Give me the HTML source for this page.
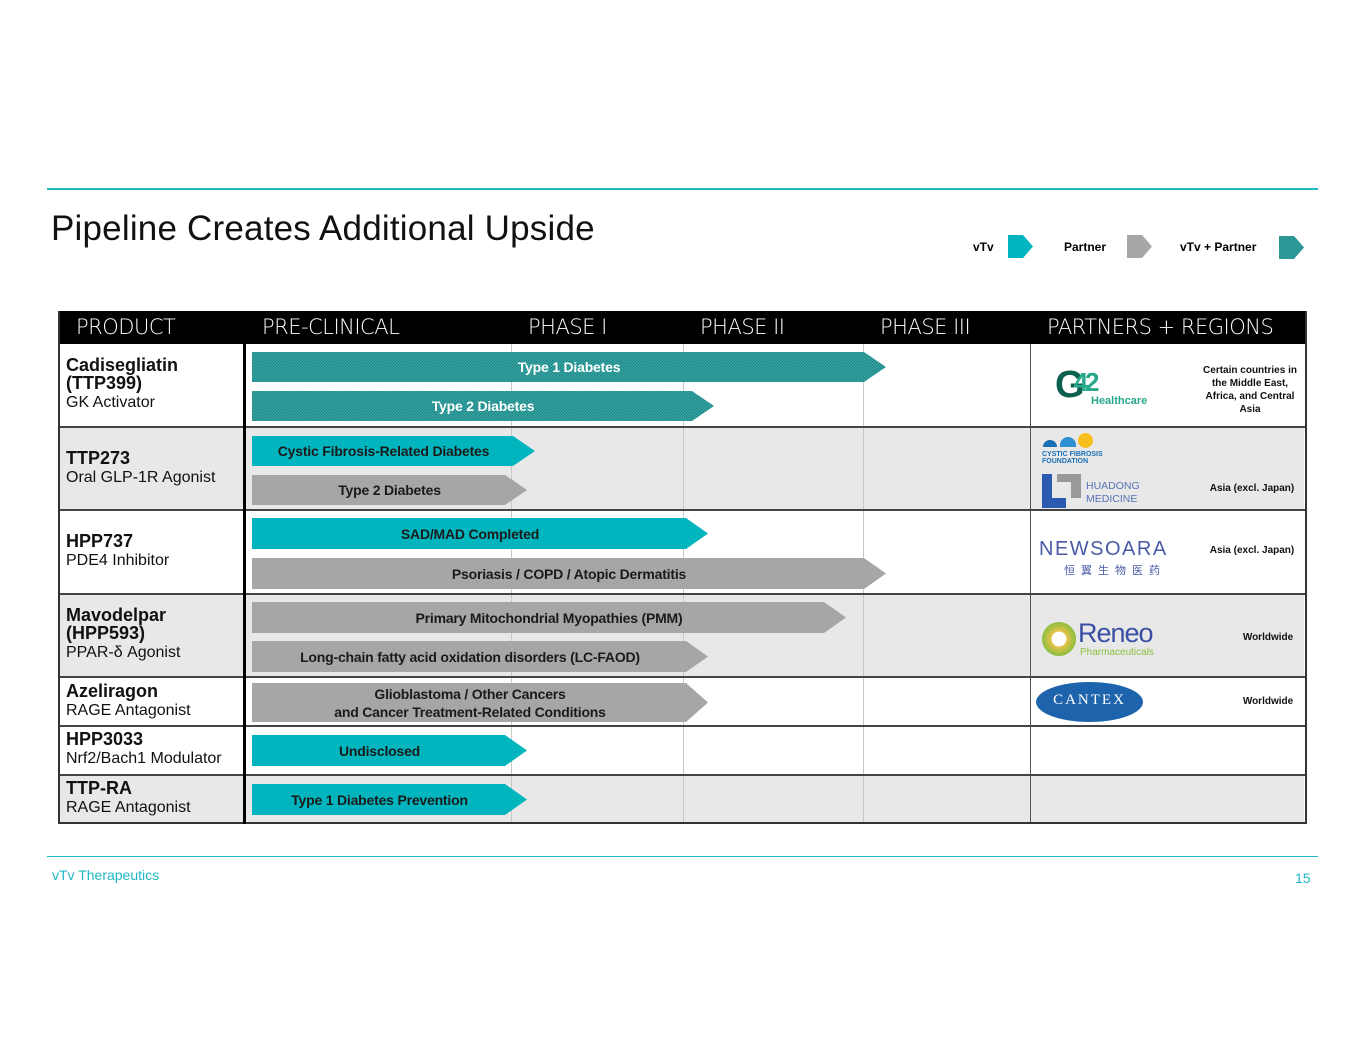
<!DOCTYPE html>
<html><head><meta charset="utf-8"><style>
body{margin:0;width:1365px;height:1055px;background:#fff;position:relative;font-family:"Liberation Sans",sans-serif;overflow:hidden}
.a{position:absolute}
.bar{position:absolute;color:#fff;font-weight:bold;font-size:14px;display:flex;align-items:center;justify-content:center;text-align:center;line-height:18px;letter-spacing:-0.2px}
.t{background:#00b5be;color:#1a1a1a}
.g{background:#a6a6a6;color:#1a1a1a}
.c{background:repeating-conic-gradient(#1f8585 0 25%,#3aa9a6 0 50%) 0 0/3px 3px;color:#fff}
.hd{position:absolute;top:311px;height:33px;line-height:33px;color:#fff;font-size:21px;font-family:"DejaVu Sans",sans-serif;font-weight:200;letter-spacing:-0.5px}
.pn{position:absolute;left:66px;font-size:18px;color:#111;line-height:18px}
.pn b{font-size:18px}
.rg{position:absolute;font-size:10px;font-weight:bold;text-align:center;color:#111;line-height:13px}
</style></head><body>
<div class="a" style="left:47px;top:188px;width:1271px;height:2px;background:#1fb8c3"></div>
<div class="a" style="left:51px;top:209px;font-size:35px;color:#111;font-family:'Liberation Sans',sans-serif;letter-spacing:0.2px">Pipeline Creates Additional Upside</div>
<div class="a" style="left:973px;top:240px;font-size:12px;font-weight:bold">vTv</div>
<div class="a" style="left:1008px;top:235px;width:25px;height:23px;background:#00b5be;clip-path:polygon(0 0,60% 0,100% 50%,60% 100%,0 100%)"></div>
<div class="a" style="left:1064px;top:240px;font-size:12px;font-weight:bold">Partner</div>
<div class="a" style="left:1127px;top:235px;width:25px;height:23px;background:#a6a6a6;clip-path:polygon(0 0,60% 0,100% 50%,60% 100%,0 100%)"></div>
<div class="a" style="left:1180px;top:240px;font-size:12px;font-weight:bold">vTv + Partner</div>
<div class="a c" style="left:1279px;top:236px;width:25px;height:23px;clip-path:polygon(0 0,60% 0,100% 50%,60% 100%,0 100%)"></div>

<!-- table -->
<div class="a" style="left:58px;top:311px;width:1247px;height:33px;background:#000"></div>
<div class="hd" style="left:76px">PRODUCT</div>
<div class="hd" style="left:262px">PRE-CLINICAL</div>
<div class="hd" style="left:528px">PHASE I</div>
<div class="hd" style="left:700px">PHASE II</div>
<div class="hd" style="left:880px">PHASE III</div>
<div class="hd" style="left:1047px">PARTNERS + REGIONS</div>
<div class="a" style="left:58px;top:344px;width:1246px;height:83px;background:#fff"></div>
<div class="a" style="left:58px;top:427px;width:1246px;height:83px;background:#e8e8e8"></div>
<div class="a" style="left:58px;top:594px;width:1246px;height:83px;background:#e8e8e8"></div>
<div class="a" style="left:58px;top:775px;width:1246px;height:49px;background:#e8e8e8"></div>
<div class="a" style="left:511px;top:344px;width:1px;height:480px;background:#c8c8c8"></div>
<div class="a" style="left:683px;top:344px;width:1px;height:480px;background:#c8c8c8"></div>
<div class="a" style="left:863px;top:344px;width:1px;height:480px;background:#c8c8c8"></div>
<div class="a" style="left:1030px;top:344px;width:1px;height:480px;background:#555"></div>
<div class="a" style="left:58px;top:426px;width:1247px;height:2px;background:#444"></div>
<div class="a" style="left:58px;top:509px;width:1247px;height:2px;background:#444"></div>
<div class="a" style="left:58px;top:593px;width:1247px;height:2px;background:#444"></div>
<div class="a" style="left:58px;top:676px;width:1247px;height:2px;background:#444"></div>
<div class="a" style="left:58px;top:725px;width:1247px;height:2px;background:#444"></div>
<div class="a" style="left:58px;top:774px;width:1247px;height:2px;background:#444"></div>
<div class="a" style="left:58px;top:311px;width:1245px;height:511px;border:2px solid #333;border-top:none"></div>
<div class="a" style="left:243px;top:311px;width:3px;height:513px;background:#000"></div>

<!-- products -->
<div class="pn" style="top:356px"><b>Cadisegliatin<br>(TTP399)</b><br><span style="font-size:16px">GK Activator</span></div>
<div class="pn" style="top:449px"><b>TTP273</b><br><span style="font-size:16px">Oral GLP-1R Agonist</span></div>
<div class="pn" style="top:532px"><b>HPP737</b><br><span style="font-size:16px">PDE4 Inhibitor</span></div>
<div class="pn" style="top:606px"><b>Mavodelpar<br>(HPP593)</b><br><span style="font-size:16px">PPAR-δ Agonist</span></div>
<div class="pn" style="top:682px"><b>Azeliragon</b><br><span style="font-size:16px">RAGE Antagonist</span></div>
<div class="pn" style="top:730px"><b>HPP3033</b><br><span style="font-size:16px">Nrf2/Bach1 Modulator</span></div>
<div class="pn" style="top:779px"><b>TTP-RA</b><br><span style="font-size:16px">RAGE Antagonist</span></div>

<!-- bars -->
<div class="bar c" style="left:252px;top:352px;width:634px;height:30px;clip-path:polygon(0 0,calc(100% - 22px) 0,100% 50%,calc(100% - 22px) 100%,0 100%)">Type 1 Diabetes</div>
<div class="bar c" style="left:252px;top:391px;width:462px;height:30px;clip-path:polygon(0 0,calc(100% - 22px) 0,100% 50%,calc(100% - 22px) 100%,0 100%)">Type 2 Diabetes</div>
<div class="bar t" style="left:252px;top:436px;width:283px;height:30px;padding-right:20px;box-sizing:border-box;clip-path:polygon(0 0,calc(100% - 22px) 0,100% 50%,calc(100% - 22px) 100%,0 100%)">Cystic Fibrosis-Related Diabetes</div>
<div class="bar g" style="left:252px;top:475px;width:275px;height:30px;clip-path:polygon(0 0,calc(100% - 22px) 0,100% 50%,calc(100% - 22px) 100%,0 100%)">Type 2 Diabetes</div>
<div class="bar t" style="left:252px;top:518px;width:456px;height:31px;padding-right:20px;box-sizing:border-box;clip-path:polygon(0 0,calc(100% - 22px) 0,100% 50%,calc(100% - 22px) 100%,0 100%)">SAD/MAD Completed</div>
<div class="bar g" style="left:252px;top:558px;width:634px;height:31px;clip-path:polygon(0 0,calc(100% - 22px) 0,100% 50%,calc(100% - 22px) 100%,0 100%)">Psoriasis / COPD / Atopic Dermatitis</div>
<div class="bar g" style="left:252px;top:602px;width:594px;height:31px;clip-path:polygon(0 0,calc(100% - 22px) 0,100% 50%,calc(100% - 22px) 100%,0 100%)">Primary Mitochondrial Myopathies (PMM)</div>
<div class="bar g" style="left:252px;top:641px;width:456px;height:31px;padding-right:20px;box-sizing:border-box;clip-path:polygon(0 0,calc(100% - 22px) 0,100% 50%,calc(100% - 22px) 100%,0 100%)">Long-chain fatty acid oxidation disorders (LC-FAOD)</div>
<div class="bar g" style="left:252px;top:683px;width:456px;height:39px;padding-right:20px;box-sizing:border-box;clip-path:polygon(0 0,calc(100% - 22px) 0,100% 50%,calc(100% - 22px) 100%,0 100%)">Glioblastoma / Other Cancers<br>and Cancer Treatment-Related Conditions</div>
<div class="bar t" style="left:252px;top:735px;width:275px;height:31px;padding-right:20px;box-sizing:border-box;clip-path:polygon(0 0,calc(100% - 22px) 0,100% 50%,calc(100% - 22px) 100%,0 100%)">Undisclosed</div>
<div class="bar t" style="left:252px;top:784px;width:275px;height:31px;padding-right:20px;box-sizing:border-box;clip-path:polygon(0 0,calc(100% - 22px) 0,100% 50%,calc(100% - 22px) 100%,0 100%)">Type 1 Diabetes Prevention</div>

<!-- partners -->
<div class="a" style="left:1055px;top:364px;font-size:38px;font-weight:bold;color:#0d5f4e;letter-spacing:-3px">G<span style="color:#27a88a;font-size:26px;position:relative;top:-6px;left:-8px">42</span></div>
<div class="a" style="left:1091px;top:395px;font-size:11px;font-weight:bold;color:#27a88a">Healthcare</div>
<div class="rg" style="left:1198px;top:364px;width:104px">Certain countries in the Middle East, Africa, and Central Asia</div>

<div class="a" style="left:1043px;top:440px;width:14px;height:7px;border-radius:7px 7px 0 0;background:#1a6fb5"></div>
<div class="a" style="left:1060px;top:437px;width:16px;height:10px;border-radius:8px 8px 0 0;background:#2e90d3"></div>
<div class="a" style="left:1078px;top:433px;width:15px;height:15px;border-radius:50%;background:#f8be1c"></div>
<div class="a" style="left:1042px;top:451px;font-size:7px;font-weight:bold;color:#1a6fb5;line-height:7px">CYSTIC FIBROSIS<br>FOUNDATION</div>
<div class="a" style="left:1042px;top:474px;width:10px;height:34px;background:#2b5bb0"></div>
<div class="a" style="left:1042px;top:498px;width:24px;height:10px;background:#2b5bb0"></div>
<div class="a" style="left:1057px;top:474px;width:24px;height:8px;background:#999"></div>
<div class="a" style="left:1071px;top:474px;width:10px;height:24px;background:#999"></div>
<div class="a" style="left:1086px;top:480px;font-size:10.5px;color:#5573b8;line-height:13px">HUADONG<br>MEDICINE</div>
<div class="rg" style="left:1200px;top:482px;width:104px">Asia (excl. Japan)</div>

<div class="a" style="left:1039px;top:538px;font-size:20px;color:#4a5aa6;letter-spacing:1.5px">NEWSOARA</div>
<div class="a" style="left:1064px;top:562px;font-size:11px;color:#4a5aa6;letter-spacing:6px;font-family:'Noto Sans CJK SC',sans-serif">恒翼生物医药</div>
<div class="rg" style="left:1200px;top:544px;width:104px">Asia (excl. Japan)</div>

<div class="a" style="left:1042px;top:622px;width:34px;height:34px;border-radius:50%;background:radial-gradient(#fff 30%,#e8c24a 32%,#8bbf3f 70%)"></div>
<div class="a" style="left:1078px;top:618px;font-size:27px;color:#3a4fa3;letter-spacing:-1px">Reneo</div>
<div class="a" style="left:1080px;top:647px;font-size:10px;color:#8bbf3f">Pharmaceuticals</div>
<div class="rg" style="left:1230px;top:631px;width:76px">Worldwide</div>

<div class="a" style="left:1036px;top:682px;width:107px;height:40px;border-radius:50%;background:#1e64ad;color:#fff;font-family:'Liberation Serif',serif;font-size:15px;text-align:center;line-height:36px;letter-spacing:2px">CANTEX</div>
<div class="rg" style="left:1230px;top:695px;width:76px">Worldwide</div>

<div class="a" style="left:47px;top:856px;width:1271px;height:1px;background:#1fb8c3"></div>
<div class="a" style="left:52px;top:867px;font-size:14px;color:#1fb8c3">vTv Therapeutics</div>
<div class="a" style="left:1295px;top:870px;font-size:14px;color:#1fb8c3">15</div>
</body></html>
